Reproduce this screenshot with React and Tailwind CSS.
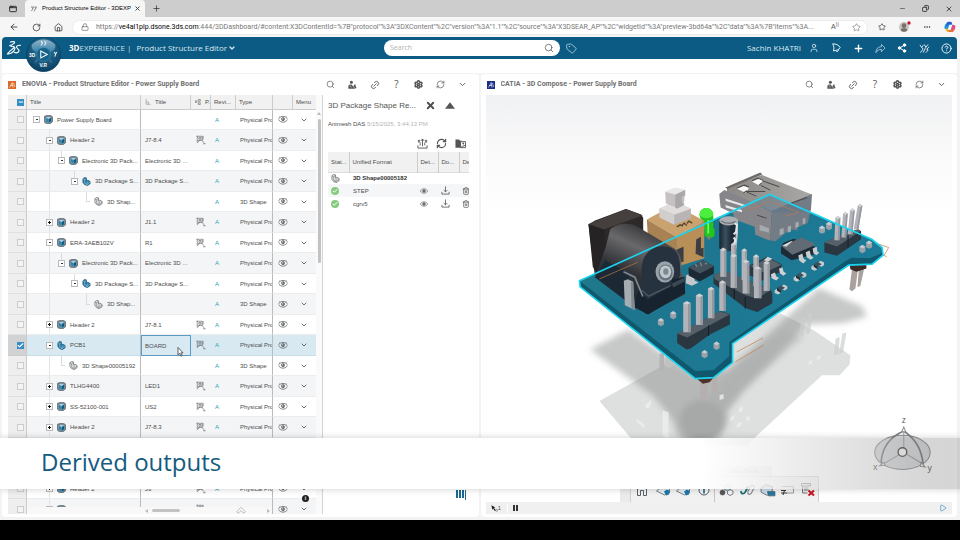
import React, { useState } from 'react'
import {
  AppWindow, ArrowLeft, Check, ChevronDown, CircleHelp, Copy, Ellipsis, House, Link2, Lock,
  Minus, Play, Plus, RotateCw, RefreshCw, Search, Settings, Share2, Star, Tag, Trash2, User, X,
} from 'lucide-react'

const ROWS = [
  { depth: 0, toggle: '-', icon: 'product', title: 'Power Supply Board', type: 'Physical Product' },
  { depth: 1, toggle: '-', icon: 'product', title: 'Header 2', inst: 'J7-8.4', pos: true, type: 'Physical Product' },
  { depth: 2, toggle: '-', icon: 'product', title: 'Electronic 3D Pack...', inst: 'Electronic 3D ...', type: 'Physical Product' },
  { depth: 3, toggle: '-', icon: 'part', title: '3D Package S...', inst: '3D Package S...', type: 'Physical Product' },
  { depth: 4, icon: 'shape', title: '3D Shap...', type: '3D Shape' },
  { depth: 1, toggle: '+', icon: 'product', title: 'Header 2', inst: 'J1.1', pos: true, type: 'Physical Product' },
  { depth: 1, toggle: '-', icon: 'product', title: 'ERA-3AEB102V', inst: 'R1', pos: true, type: 'Physical Product' },
  { depth: 2, toggle: '-', icon: 'product', title: 'Electronic 3D Pack...', inst: 'Electronic 3D ...', type: 'Physical Product' },
  { depth: 3, toggle: '-', icon: 'part', title: '3D Package S...', inst: '3D Package S...', type: 'Physical Product' },
  { depth: 4, icon: 'shape', title: '3D Shap...', type: '3D Shape' },
  { depth: 1, toggle: '+', icon: 'product', title: 'Header 2', inst: 'J7-8.1', pos: true, type: 'Physical Product' },
  { depth: 1, toggle: '-', icon: 'part', title: 'PCB1', inst: 'BOARD', pos: true, type: 'Physical Product' },
  { depth: 2, icon: 'shape', title: '3D Shape00005192', type: '3D Shape' },
  { depth: 1, toggle: '+', icon: 'product', title: 'TLHG4400', inst: 'LED1', pos: true, type: 'Physical Product' },
  { depth: 1, toggle: '+', icon: 'product', title: 'SS-52100-001', inst: 'US2', pos: true, type: 'Physical Product' },
  { depth: 1, toggle: '+', icon: 'product', title: 'Header 2', inst: 'J7-8.3', pos: true, type: 'Physical Product' },
  { depth: 1, toggle: '+', icon: 'product' },
  { depth: 1, toggle: '+', icon: 'product' },
  { depth: 1, toggle: '+', icon: 'product', title: 'Header 2', inst: 'J3', pos: true, type: 'Physical Product' },
  { depth: 1, toggle: '+', icon: 'product', title: 'ERA-3AEB102V', inst: 'R4', pos: true, type: 'Physical Product' },
]

const INDENT = ['pl-[6px]', 'pl-[19px]', 'pl-[31px]', 'pl-[44px]', 'pl-[56px]']
const STUB = ['left-[9px]', 'left-[22px]', 'left-[34px]', 'left-[47px]', 'left-[59px]']

const URL_TAIL = ':444/3DDashboard/#content:X3DContentId=%7B"protocol"%3A"3DXContent"%2C"version"%3A"1.1"%2C"source"%3A"X3DSEAR_AP"%2C"widgetId"%3A"preview-3bd64a"%2C"data"%3A%7B"items"%3A...'

function NodeIcon({ kind }) {
  if (kind === 'product') {
    return (
      <svg viewBox="0 0 20 20" className="size-[9px] shrink-0">
        <path d="M1 3l5-2h9l4 3v11l-5 4H5l-4-3z" fill="#7b8991" stroke="#4b5961" strokeWidth="1.5" />
        <path d="M4 6l6-2 6 2v8l-6 4-6-4z" fill="#a9d3e8" />
        <path d="M10 9l6-3v8l-6 4z" fill="#14587b" />
        <path d="M4 6l6 3v9l-6-4z" fill="#2f83ad" />
      </svg>
    )
  }
  const part = kind === 'part'
  return (
    <svg viewBox="0 0 20 20" className="size-[9px] shrink-0">
      <path
        d="M2 4l4-3 4 1v7l3-2 5 3v5l-6 4-6-2-4-5z"
        fill={part ? '#2879a3' : '#e3e5e6'}
        stroke={part ? '#174f6d' : '#5d6265'}
        strokeWidth="1.5"
      />
      <path d="M2 4l4 2 4-3M6 6v8l5 3 7-6M11 17v-5l3-2" fill="none" stroke={part ? '#a4d4ec' : '#6d7275'} strokeWidth="1.3" />
    </svg>
  )
}

function EyeIcon() {
  return (
    <svg viewBox="0 0 24 18" className="h-[7px] w-[10px]" fill="none" stroke="#4b4f52" strokeWidth="1.8">
      <path d="M1 7c5-8 17-8 22 0M1 9c3 9 19 9 22 0M4 3l-2-1M20 3l2-1" />
      <circle cx="12" cy="8" r="4" fill="#777c7f" strokeWidth="1.5" />
      <circle cx="11" cy="7" r="1.3" fill="#fff" stroke="none" />
    </svg>
  )
}

function PositionIcon() {
  return (
    <svg viewBox="0 0 24 24" className="size-[10px]" fill="none" stroke="#5d6164" strokeWidth="1.5">
      <path d="M3 2v15M1 3h14v10H4M7 6h5v4H7zM2 19l7-6M13 12l8 8M17 21h6M17 2v9" />
    </svg>
  )
}

function PersonShareIcon() {
  return (
    <svg viewBox="0 0 24 24" className="size-[9px]" fill="currentColor">
      <circle cx="9" cy="6" r="4" />
      <path d="M1 21v-6c2-4 10-4 11 0l2 2 5-7 2 8 2 3-7 2H1z" />
      <path d="M5 14l4 6M14 17l3 4" stroke="#fff" strokeWidth="1.4" />
    </svg>
  )
}

function DsLogo() {
  return (
    <svg viewBox="0 0 48 48" className="size-4" fill="none" stroke="#fff" strokeWidth="3.4" strokeLinecap="round" strokeLinejoin="round">
      <path d="M13 6c12-3 16 0 10 5-4 3-8 5-12 6M15 19c10-1 15 3 10 11-4 7-13 12-21 12 7-9 14-13 20-19" />
      <path d="M43 16c-8-1-14 3-10 8s9 8 4 12c-3 3-8 3-12 1" />
    </svg>
  )
}

function Compass() {
  return (
    <svg viewBox="0 0 102 102" className="absolute top-0 left-[24px] size-[35px]">
      <defs>
        <radialGradient id="disc" cx=".5" cy=".35" r=".65">
          <stop offset="0" stopColor="#2e7ca6" />
          <stop offset="1" stopColor="#0b3f61" />
        </radialGradient>
        <linearGradient id="gloss" x1="0" x2="0" y1="0" y2="1">
          <stop offset="0" stopColor="#8fb4c9" />
          <stop offset="1" stopColor="#3a82ab" />
        </linearGradient>
      </defs>
      <circle cx="51" cy="51" r="50" fill="url(#disc)" stroke="#0c4463" strokeWidth="2" />
      <path d="M17 22a46 46 0 0 1 68 0c3 10-4 18-14 22a22 22 0 0 0-40 0c-10-4-17-12-14-22z" fill="url(#gloss)" />
      <circle cx="51" cy="51" r="20" fill="#14618a" stroke="#3985ad" strokeWidth="2" />
      <path d="M43 41l19 10-19 10z" fill="none" stroke="#fff" strokeWidth="3" />
      <path d="M26 74l8-7M76 74l-8-7" stroke="#6ea8c6" strokeWidth="2" />
      <path d="M44 12l4 5-4 8M54 12l4 5-4 8M82 44l4 5 4-5M87 48l-3 9" fill="none" stroke="#e7f1f6" strokeWidth="3" />
      <text x="9" y="57" fontSize="14" fontWeight="bold" fill="#fff" fontFamily="Liberation Sans, sans-serif">3D</text>
      <text x="39" y="87" fontSize="14" fontWeight="bold" fill="#fff" fontFamily="Liberation Sans, sans-serif">V.R</text>
    </svg>
  )
}

function IconButton({ label, children, className = 'w-[22px]' }) {
  return (
    <button aria-label={label} className={`flex h-full shrink-0 items-center justify-center ${className}`}>
      {children}
    </button>
  )
}

function BrowserChrome() {
  return (
    <header className="shrink-0 bg-[#f6f6f6] text-[#333]">
      <div className="flex h-[17px] items-stretch bg-[#cdcdcd]">
        <IconButton label="Tab actions" className="w-[25px]"><AppWindow size={8} strokeWidth={3} /></IconButton>
        <div className="flex w-[120px] items-center rounded-t bg-[#f6f6f6] pl-1">
          <svg viewBox="0 0 24 24" className="size-[9px] shrink-0" fill="none" stroke="#555" strokeWidth="1.8">
            <path d="M5 8h7l-3 5M6 19l5-7M14 8h6l-3 5M13 20l5-8" />
          </svg>
          <span className="ml-1 w-[91px] whitespace-nowrap text-[6px] text-black">
            Product Structure Editor - 3DEXP
          </span>
          <IconButton label="Close tab" className="w-2"><X size={7} strokeWidth={3} /></IconButton>
        </div>
        <IconButton label="New tab"><Plus size={9} strokeWidth={2} /></IconButton>
        <div className="flex-1" />
        <IconButton label="Minimize" className="w-[23px]"><Minus size={7} /></IconButton>
        <IconButton label="Restore" className="w-[23px]"><Copy size={7} strokeWidth={3} className="-scale-x-100" /></IconButton>
        <IconButton label="Close" className="w-[23px]"><X size={8} strokeWidth={2.5} /></IconButton>
      </div>
      <div className="flex h-5 items-center pl-[3px]">
        <IconButton label="Back"><ArrowLeft size={10} /></IconButton>
        <IconButton label="Refresh"><RotateCw size={9} /></IconButton>
        <IconButton label="Home"><House size={9} /></IconButton>
        <div className="ml-[3px] flex h-[15px] min-w-0 flex-1 items-center rounded-full border border-[#ececec] bg-white pl-2">
          <Lock size={8} className="shrink-0 text-[#666]" />
          <p className="ml-[7px] min-w-0 flex-1 overflow-hidden font-[Roboto,sans-serif] text-[7px] whitespace-nowrap text-[#777]">
            https://<span className="text-black">ve4al1plp.dsone.3ds.com</span>{URL_TAIL}
          </p>
          <button aria-label="Read aloud" className="w-5 shrink-0 text-[7px] text-[#555]">A<sup>))</sup></button>
          <IconButton label="Add favorite"><Star size={9} strokeWidth={1.5} className="text-[#666]" /></IconButton>
        </div>
        <IconButton label="Favorites" className="w-7"><Star size={8} /></IconButton>
        <IconButton label="Profile" className="w-[18px]">
          <svg viewBox="0 0 36 36" className="size-3">
            <circle cx="15" cy="18" r="15" fill="#c8c4c1" />
            <circle cx="15" cy="14" r="7" fill="#77706c" />
            <path d="M5 28c2-9 18-9 20 0-6 6-14 6-20 0" fill="#77706c" />
            <circle cx="30" cy="6" r="5" fill="#c3162d" />
          </svg>
        </IconButton>
        <IconButton label="More" className="w-[26px]"><Ellipsis size={8} /></IconButton>
        <IconButton label="Copilot" className="w-5">
          <svg viewBox="0 0 36 36" className="size-3">
            <path d="M10 3h10l4 8h-8l-5 15-6-1c-5-2-4-7-2-13z" fill="#1c90d8" />
            <path d="M6 14L12 2h8c4 0 3 6 6 8H15z" fill="#2c59c8" />
            <path d="M4 22l8 1 5 10h-6c-4 0-6-6-7-11" fill="#eab52f" />
            <path d="M26 33H16l-3-6h7l5-16 6 1c5 2 3 8 1 14z" fill="#e0488e" />
            <path d="M26 33H16l-3-6h12l6-8c1 6-2 14-5 14" fill="#ef7138" />
          </svg>
        </IconButton>
      </div>
    </header>
  )
}

function TopBar() {
  return (
    <nav className="relative z-10 flex h-[22px] shrink-0 items-center rounded-t bg-[#0b5b84] font-['Open_Sans',sans-serif] text-white">
      <div className="flex w-[40%] items-center pl-1">
        <DsLogo />
        <Compass />
        <span className="ml-[47px] text-[8px] whitespace-nowrap"><b>3D</b><span className="text-[#c9dfea]">EXPERIENCE |</span></span>
        <button className="ml-[5px] flex items-center text-[8px] whitespace-nowrap text-[#d9e8f0]">
          Product Structure Editor <ChevronDown size={8} strokeWidth={4} className="ml-px" />
        </button>
      </div>
      <label className="flex h-4 w-[176px] items-center rounded-full bg-white px-[6px]">
        <input
          aria-label="Search"
          placeholder="Search"
          className="min-w-0 flex-1 text-[7px] text-black outline-none placeholder:text-[#b3b3b3]"
        />
        <Search size={10} strokeWidth={1.6} className="text-[#444]" />
      </label>
      <IconButton label="Tags"><Tag size={11} strokeWidth={1.5} className="-rotate-6 text-[#d5e6ee]" /></IconButton>
      <div className="flex h-full flex-1 items-center justify-end">
        <span className="mr-[2px] text-[8px] whitespace-nowrap text-[#dbe9f0]">Sachin KHATRI</span>
        <IconButton label="Profile"><User size={10} strokeWidth={1.6} /></IconButton>
        <IconButton label="Notifications">
          <svg viewBox="0 0 24 24" className="size-[10px]" fill="none" stroke="currentColor" strokeWidth="2.2" strokeLinejoin="round">
            <path d="M4 2c8 0 15 3 18 9-1 4-9 7-16 8 2-5 1-12-2-17zM12 19c3 3 6 1 6-3" />
          </svg>
        </IconButton>
        <IconButton label="Add"><Plus size={11} strokeWidth={3} /></IconButton>
        <IconButton label="Share">
          <svg viewBox="0 0 24 24" className="size-[11px]" fill="none" stroke="#d5e6ee" strokeWidth="1.5" strokeLinejoin="round">
            <path d="M14 3l8 8-8 8v-5c-6 0-9 2-12 7 0-8 5-13 12-13z" />
          </svg>
        </IconButton>
        <IconButton label="Network"><Share2 size={10} fill="currentColor" strokeWidth={2.4} /></IconButton>
        <IconButton label="Communities">
          <svg viewBox="0 0 24 24" className="size-[11px]" fill="none" stroke="currentColor" strokeWidth="1.8">
            <path d="M2 4l4 6 3-5M6 10l3 3-6 8M11 3l4 6 5-6M15 9l-6 12M22 8l-5 6 3 1-5 6" />
          </svg>
        </IconButton>
        <IconButton label="Help"><CircleHelp size={11} strokeWidth={2} /></IconButton>
      </div>
    </nav>
  )
}

function PanelHeader({ title, tint }) {
  return (
    <div className="flex h-[21px] shrink-0 items-center pl-[6px] pr-[5px] text-[#555]">
      <svg viewBox="0 0 16 16" className="size-2 shrink-0">
        <rect width="16" height="16" fill={tint} />
        <path d="M3 13L9 3M8 3l2 10M4 9h6M11 4l2 8" stroke="#fff" strokeWidth="1.2" fill="none" />
      </svg>
      <h2 className="ml-[6px] flex-1 truncate font-[Roboto,sans-serif] text-[7px] font-bold text-[#707070]">{title}</h2>
      <IconButton label="Find"><Search size={9} strokeWidth={1.8} /></IconButton>
      <IconButton label="Collaborate"><PersonShareIcon /></IconButton>
      <IconButton label="Copy link"><Link2 size={10} strokeWidth={2} className="-rotate-45" /></IconButton>
      <IconButton label="Help"><span className="font-['Open_Sans',sans-serif] text-[10px]">?</span></IconButton>
      <IconButton label="Preferences"><Settings size={9} strokeWidth={4} /></IconButton>
      <IconButton label="Refresh"><RefreshCw size={9} strokeWidth={1.8} /></IconButton>
      <IconButton label="Widget menu"><ChevronDown size={9} strokeWidth={2.4} /></IconButton>
    </div>
  )
}

function TreeRow({ row, selected, onSelect }) {
  const { depth, toggle, icon, title, inst, pos, type } = row
  const line = selected ? 'border-b-[#c8dde7]' : 'border-b-[#ebecee]'
  return (
    <tr className={`odd:h-5 even:h-[21px] ${selected ? 'bg-[#d8e9f1]' : 'odd:bg-white even:bg-[#f4f5f7]'}`}>
      <td className={`border-r border-b border-r-[#ccc] ${selected ? 'border-b-[#ccc] bg-[#d0d2d3]' : 'border-b-[#e0e0e0] bg-[#eeeeee]'}`}>
        <label className="relative ml-[9px] flex size-[7px]">
          <input
            type="checkbox"
            aria-label={`Select ${title}`}
            checked={selected}
            onChange={onSelect}
            className="size-[7px] appearance-none border border-[#ccc] bg-[#f4f4f4] checked:border-[#368ec4] checked:bg-[#368ec4]"
          />
          {selected && <Check size={7} strokeWidth={4} className="absolute text-white" />}
        </label>
      </td>
      <td className={`relative border-r border-b border-r-[#bbb] ${line}`}>
        {depth > 0 && <i className="absolute inset-y-0 left-[22px] w-px bg-[#e2e4e5]" />}
        {depth > 1 && <i className={`absolute top-0 h-1/2 w-px bg-[#d9dbdc] ${STUB[depth]}`} />}
        <div className={`relative flex items-center overflow-hidden whitespace-nowrap ${INDENT[depth]}`}>
          {toggle ? (
            <button aria-label={`Toggle ${title}`} className="flex size-[7px] shrink-0 items-center justify-center border border-[#b9b9b9] bg-white text-black">
              {toggle === '+'
                ? <svg viewBox="0 0 5 5" className="size-[5px]"><path d="M2 1h1v1h1v1H3v1H2V3H1V2h1z" fill="#111" /></svg>
                : <i className="h-px w-[2px] bg-[#333]" />}
            </button>
          ) : (
            <i className="flex w-[7px] shrink-0 pl-[3px]"><i className="h-px w-1 bg-[#d9dbdc]" /></i>
          )}
          <span className="mr-1 ml-[4px]"><NodeIcon kind={icon} /></span>
          {title}
        </div>
      </td>
      <td className={`overflow-hidden whitespace-nowrap ${selected ? 'border border-[#5b9bc2] pl-[3px]' : `border-b pl-1 ${line}`}`}>{inst}</td>
      <td className={`border-b pl-[5px] ${line}`}>{pos && <PositionIcon />}</td>
      <td className={`border-b pl-1 text-[#2ba3b5] ${line}`}>{title && 'A'}</td>
      <td className={`overflow-hidden border-r border-b border-r-[#bbb] pl-1 whitespace-nowrap ${line}`}>{type}</td>
      <td className={`border-b pl-[5px] ${line}`}><EyeIcon /></td>
      <td className={`border-b pl-[7px] ${line}`}>
        <button aria-label={`Menu of ${title}`} className="flex"><ChevronDown size={8} strokeWidth={2.4} /></button>
      </td>
    </tr>
  )
}

function StructureGrid() {
  const [picked, setPicked] = useState([11])
  const flip = i => setPicked(p => (p.includes(i) ? p.filter(n => n !== i) : [...p, i]))
  const th = 'overflow-hidden border-r border-b border-[#ccc] text-left font-normal whitespace-nowrap'

  return (
    <div className="relative flex w-[315px] shrink-0 overflow-hidden border-r border-[#d5d5d5]">
      <table className="w-[308px] table-fixed border-separate border-spacing-0 self-start text-[6px] leading-[8px] text-[#4c4c4c]">
        <colgroup>
          <col className="w-[19px]" />
          <col className="w-[114px]" />
          <col className="w-[50px]" />
          <col className="w-[20px]" />
          <col className="w-[25px]" />
          <col className="w-[37px]" />
          <col className="w-[20px]" />
          <col />
        </colgroup>
        <thead className="bg-[#f1f1f1]">
          <tr className="h-[15px]">
            <th className={th}>
              <button aria-label="Clear selection" className="ml-[9px] flex size-[7px] items-center justify-center bg-[#368ec4] text-white">
                <Minus size={6} strokeWidth={4} />
              </button>
            </th>
            <th className={`${th} pl-[3px]`}>Title</th>
            <th className={`${th} pl-1`}>
              <span className="flex items-center gap-[4px]">
                <svg viewBox="0 0 16 16" className="size-[6px]" fill="none" stroke="#888" strokeWidth="1.5"><path d="M3 0v14h12M3 8h6v6" /></svg>
                Title
              </span>
            </th>
            <th className={`${th} pl-1`}>
              <span className="flex items-center gap-[4px]">
                <svg viewBox="0 0 16 16" className="size-[6px] shrink-0" fill="none" stroke="#777" strokeWidth="2"><path d="M1 5h4v4H1zM9 1h5v5H9zM9 10h5v5H9z" /></svg>
                P.
              </span>
            </th>
            <th className={`${th} pl-[3px]`}>Revi...</th>
            <th className={`${th} pl-[3px]`}>Type</th>
            <th className={th} aria-label="Visibility" />
            <th className="border-b border-[#ccc] pl-[3px] text-left font-normal">Menu</th>
          </tr>
        </thead>
        <tbody>
          {ROWS.map((row, i) => (
            <TreeRow key={i} row={row} selected={picked.includes(i)} onSelect={() => flip(i)} />
          ))}
        </tbody>
      </table>
      {/* vertical scrollbar */}
      <div className="flex flex-1 flex-col items-center bg-[#fafafa] pt-[17px]">
        <i className="border-x-2 border-b-3 border-x-transparent border-b-[#bbb]" />
        <i className="mt-1 h-36 w-[3px] rounded-full bg-[#c2c2c2]" />
      </div>
      {/* horizontal scrollbar */}
      <div className="absolute bottom-0 left-[19px] flex h-[7px] w-[246px] items-center border-r border-[#bbb] bg-[#f8f8f8] pl-[118px]">
        <i className="border-y-2 border-r-3 border-y-transparent border-r-[#bbb]" />
        <i className="ml-1 h-[3px] w-7 rounded-full bg-[#c2c2c2]" />
        <svg viewBox="0 0 28 20" className="ml-14 h-[7px] w-[10px]" fill="#fff" stroke="#999" strokeWidth="2"><path d="M2 13L14 1l12 12-4 5-8-8-8 8z" /></svg>
        <i className="ml-[21px] border-y-2 border-l-3 border-y-transparent border-l-[#bbb]" />
      </div>
      <span className="absolute right-[13px] bottom-3 flex size-[7px] items-center justify-center rounded-full bg-[#222] text-[5px] font-bold text-white">i</span>
      {/* pointer */}
      <svg viewBox="0 0 16 24" className="absolute top-[252px] left-[169px] h-[10px] w-[7px]">
        <path d="M2 1v18l4-4 3 7 3-1-3-7h5z" fill="#fff" stroke="#333" strokeWidth="1.8" />
      </svg>
    </div>
  )
}

function DownloadIcon() {
  return (
    <svg viewBox="0 0 20 20" className="size-[9px]" fill="none" stroke="#555" strokeWidth="1.8">
      <path d="M2 13v5h16v-5M10 1v12M6 9l4 4 4-4" />
    </svg>
  )
}

function DerivedPane() {
  const th = 'overflow-hidden border-r border-[#ccc] pl-[3px] text-left font-normal whitespace-nowrap'
  return (
    <section className="relative flex min-w-0 flex-1 flex-col pt-[5px] pr-[10px] pl-[5px] text-[#4c4c4c]">
      <div className="flex items-center">
        <h3 className="text-[8px] leading-[10px] whitespace-nowrap text-[#555]">3D Package Shape Re...</h3>
        <button aria-label="Close" className="ml-[9px]"><X size={11} strokeWidth={4} /></button>
        <button aria-label="Collapse" className="ml-[9px]">
          <svg viewBox="0 0 12 8" className="h-[7px] w-[10px]"><path d="M6 0l6 8H0z" fill="#555" /></svg>
        </button>
      </div>
      <p className="mt-[9px] text-[6px] leading-[8px] whitespace-nowrap">Animesh DAS <span className="text-[#b5b5b5]">5/15/2025, 3:44:13 PM</span></p>
      <div className="mt-[10px] flex justify-end gap-2 pr-[3px] text-[#555]">
        <button aria-label="Convert">
          <svg viewBox="0 0 24 24" className="size-[11px]" fill="none" stroke="#555" strokeWidth="2">
            <path d="M2 16v6h20v-6M12 18V3M9 6l3-4 3 4M7 16C8 10 5 7 4 6M17 16c-1-6 2-9 3-10M3 10V5h4M21 10V5h-4" />
          </svg>
        </button>
        <button aria-label="Refresh"><RefreshCw size={11} strokeWidth={2.6} /></button>
        <button aria-label="Output folder">
          <svg viewBox="0 0 24 24" className="size-[11px]">
            <path d="M1 3h8l2 3h4v15H1z" fill="#555" />
            <path d="M12 8h11v13H12z" fill="#fff" stroke="#555" strokeWidth="2" />
            <circle cx="18" cy="12" r="2" fill="#555" />
            <path d="M14 19l8-3" stroke="#555" strokeWidth="2" />
          </svg>
        </button>
      </div>
      <div className="mt-[3px] overflow-hidden">
        <table className="w-full min-w-[141px] table-fixed text-[6px] leading-[8px]">
          <colgroup>
            <col className="w-[21px]" />
            <col />
            <col className="w-[21px]" />
            <col className="w-[21px]" />
            <col className="w-[10px]" />
          </colgroup>
          <thead>
            <tr className="h-5 border-b border-[#ddd] bg-[#f1f1f1]">
              <th className={th}>Stat...</th>
              <th className={`${th} pl-1`}>Unified Format</th>
              <th className={th}>Det...</th>
              <th className={th}>Do...</th>
              <th className="overflow-hidden pl-[3px] text-left font-normal">De</th>
            </tr>
          </thead>
          <tbody>
            <tr className="h-3">
              <td className="pl-[3px]"><NodeIcon kind="shape" /></td>
              <td colSpan={4} className="pl-1 font-bold text-[#333]">3D Shape00005182</td>
            </tr>
            {['STEP', 'cgrv5'].map(fmt => (
              <tr key={fmt} className="h-[13px] odd:bg-white even:bg-[#f4f6f8]">
                <td className="pl-[3px]">
                  <span className="flex size-2 items-center justify-center rounded-full bg-[#86ca80] text-white"><Check size={6} strokeWidth={4} /></span>
                </td>
                <td className="pl-1">{fmt}</td>
                <td className="pl-[3px]"><svg viewBox="0 0 24 16" className="h-[6px] w-2" fill="none" stroke="#666" strokeWidth="2"><path d="M1 8c5-9 17-9 22 0-5 9-17 9-22 0" /><circle cx="12" cy="8" r="4" fill="#666" /></svg></td>
                <td className="pl-[3px]"><button aria-label={`Download ${fmt}`} className="flex"><DownloadIcon /></button></td>
                <td className="overflow-hidden pl-[3px]"><button aria-label={`Delete ${fmt}`} className="flex"><Trash2 size={8} strokeWidth={2} className="shrink-0" /></button></td>
              </tr>
            ))}
          </tbody>
        </table>
      </div>
      <div className="mt-auto mb-[14px] flex h-[10px] justify-end gap-px pr-[3px]">
        <i className="h-2 w-[2px] bg-[#1b6a92]" />
        <i className="h-2 w-[2px] bg-[#1b6a92]" />
        <i className="h-2 w-[2px] bg-[#1b6a92]" />
        <i className="h-[10px] w-px bg-[#1b6a92]" />
      </div>
    </section>
  )
}

// Square header pin, drawn from its tip down to the plastic body
function Pin({ x, y, h, w = 18, lean = 0 }) {
  return (
    <g>
      <path d={`M${x + lean} ${y}h${w}l${-lean} ${h}h${-w}z`} fill="#b2b4ba" />
      <path d={`M${x + lean + w * 0.65} ${y}h${w * 0.35}l${-lean} ${h}h${-w * 0.35}z`} fill="#94989f" />
      <path d={`M${x + lean} ${y}l${w / 2}-6 ${w / 2} 6-${w / 2} 5z`} fill="#d0d1d5" />
    </g>
  )
}

function HeaderBlock({ d, top }) {
  return (
    <g>
      <path d={d} fill="#2a3741" />
      <path d={top} fill="#566068" />
    </g>
  )
}

function Via({ x, y }) {
  return (
    <g>
      <path d={`M${x - 9} ${y - 5}h18v14l-9 5-9-5z`} fill="#9aa2a9" />
      <path d={`M${x - 9} ${y - 5}l9-6 9 6-9 5z`} fill="#c9cdd0" />
    </g>
  )
}

function Chip({ x, y }) {
  return (
    <g>
      <path d={`M${x - 4} ${y + 12}l8-5 10 5v8l-8 5-10-5zM${x + 16} ${y}l8-5 10 5v8l-8 5-10-5z`} fill="#c5cbcf" />
      <path d={`M${x + 3} ${y + 5}l12-7 12 7-12 8z`} fill="#3c505c" />
      <path d={`M${x + 3} ${y + 5}l12 8v7l-12-7z`} fill="#1c2b36" />
    </g>
  )
}

function BoardScene() {
  return (
    <svg viewBox="486 95 466 407" preserveAspectRatio="xMidYMin slice" className="size-full" role="img" aria-label="Power supply board 3D model">
      <defs>
        <linearGradient id="sky" x1="0" x2="0" y1="0" y2="1">
          <stop offset="0" stopColor="#f0f1f3" />
          <stop offset=".15" stopColor="#fafafa" />
          <stop offset=".3" stopColor="#fff" />
        </linearGradient>
        <linearGradient id="top" x1="0" x2="1" y1="0" y2=".4">
          <stop offset="0" stopColor="#1f8288" />
          <stop offset=".3" stopColor="#1e748c" />
          <stop offset="1" stopColor="#1c7b98" />
        </linearGradient>
        <linearGradient id="barrel" x1=".7" x2=".25" y1="0" y2="1">
          <stop offset="0" stopColor="#252426" />
          <stop offset=".3" stopColor="#69686b" />
          <stop offset=".55" stopColor="#323438" />
          <stop offset="1" stopColor="#15202b" />
        </linearGradient>
        <linearGradient id="can" x1="0" x2="1">
          <stop offset="0" stopColor="#162532" />
          <stop offset=".35" stopColor="#3b4f5c" />
          <stop offset=".7" stopColor="#1b2b38" />
        </linearGradient>
        <linearGradient id="shell" x1="0" x2="1">
          <stop offset="0" stopColor="#8b8885" />
          <stop offset="1" stopColor="#aaa8a6" />
        </linearGradient>
        <filter id="soft" x="-20%" y="-20%" width="140%" height="140%"><feGaussianBlur stdDeviation="10" /></filter>
        <filter id="faint"><feGaussianBlur stdDeviation="2" /></filter>
      </defs>
      <rect x="-500" y="95" width="3000" height="407" fill="url(#sky)" />

      {/* floor shadow and mirror image */}
      <g transform="translate(480 90) scale(.33333)">
        <path d="M358 932L545 828 900 670 1000 720 1110 795 1108 822 1078 855 1025 855 820 1045 800 1065H470z" fill="#dde0de" filter="url(#faint)" />
        <path d="M330 778l115-60 200 140 100-20 270-245 130 55 15 30-70 20-110 5-190 200-50 60c0 130-150 130-160 30l-60-75z" fill="#8f9291" fillOpacity=".5" filter="url(#soft)" />
        <path d="M760 830l150-110 60 20-190 160-40 60-60-40z" fill="#a7aaa9" fillOpacity=".4" filter="url(#soft)" />
        <ellipse cx="668" cy="990" rx="70" ry="62" fill="#8f9291" fillOpacity=".4" filter="url(#soft)" />
        <g fill="#edefee">
          <path d="M547 960l18 6v80l-18-10zM470 985l25 20-4 8-22-18zM495 945l20-18-6 24-10 4zM752 980l12-6-4 14-10 5zM775 955l12-8 2 12-12 8zM798 980l10-4v14l-10 3zM770 1000l16-6-4 14-14 4zM718 915l12-4v14l-12 4zM985 815l10-6v10l-10 6zM1010 800l10-6v10l-10 6z" opacity=".8" />
        </g>
        <g fill="#cbcecd">
          <path d="M962 685l12-4-4 55-12 3zM985 670l12-3-8 60-12 4zM1066 745l12-4-4 50-14 3zM1086 730l12-3-10 60-12 4z" opacity=".7" />
        </g>
        <path d="M538 790h14v45l-6 6-8-6z" fill="#b5b3b4" />
        <path d="M556 800h22v28l-10 6-12-4z" fill="#c2c1c1" />
      </g>

      <g transform="translate(570 160) scale(.33333)">
        {/* leads under the board */}
        <path d="M390 655h22v60l-10 8-12-8zM424 650h18v44l-8 8-10-6z" fill="#b5b0af" />
        <path d="M380 655l60-15-22 26-20 4z" fill="#4a332b" />
        <path d="M845 325h18l-8 60-10 8-8-5zM866 322h16l-12 55-9 4z" fill="#a8a19e" />
        <path d="M838 315l50-2v12l-30 10-18-8z" fill="#3c2c28" />

        {/* board */}
        <path d="M28 362L598 103 905 238 935 262 938 285 905 312 835 315 487 550V607L430 652 375 655 30 380z" fill="#10586e" />
        <path d="M28 362L598 103 905 238 935 262 932 280 898 294 843 293 820 306 477 545V587L430 629 375 632z" fill="url(#top)" />

        {/* usb connector */}
        <path d="M470 84L575 45 725 103 605 155 470 96z" fill="url(#shell)" />
        <path d="M465 82L570 37l6 6-104 44z" fill="#6e6c6b" />
        <path d="M462 90l143 62-5 90-45-18-2-24-60-22-4-18-38-18-4-40z" fill="#86868a" />
        <path d="M605 152l120-50-3 45-10 42-30 12v10l-22-4-45 36-15-2z" fill="#737b85" />
        <path d="M465 115l60 20v6l-58-18zM465 135l50 15v6l-48-14z" fill="#e9eaea" />
        <path d="M500 86l20-8 16 6-10 14zM545 64l22-8 12 6-12 14z" fill="#fbfbfb" />
        <path d="M525 94l60 0M530 96l28 12M575 62l52 18M572 76l28 14M500 84l22-9 14 5M545 62l18-8 14 6M520 98l10-6M566 76l8-8M560 165l28 9M660 130l50-18" fill="none" stroke="#4a494b" strokeWidth="3" />
        <path d="M568 194l28 10v14l-28-8zM628 208l12-5v18l-12 4zM652 200l10-4v18l-10 4zM675 188l10-4v16l-10 4zM697 176l8-3v16l-8 4z" fill="#a4abb0" />
        <path d="M600 105L720 155 605 158 550 127z" fill="#58768c" opacity=".45" />

        {/* led */}
        <path d="M388 165c0-28 40-28 41 0v38l4 4v18c-6 12-25 10-30 0v-16l-14-40z" fill="#21c51e" />
        <path d="M388 165c0-28 40-28 41 0-10 12-30 12-41 0z" fill="#4bee3d" />
        <path d="M414 180v40" stroke="#79f56c" strokeWidth="5" />
        <path d="M412 228l8 0v10h-8z" fill="#857f68" />

        {/* push switch */}
        <path d="M230 178L312 134 402 182 318 230z" fill="#c9a26d" />
        <path d="M230 178l88 52v75l-30-34-55-40z" fill="#a88252" />
        <path d="M318 230l84-48v112l-70 22-14-12z" fill="#b98f58" />
        <path d="M378 238l14-8v35l8-2v28l-24-10zM320 268l20-8v45l-20 2z" fill="#3a3d43" />
        <path d="M320 200l10-6 8 4M334 197l8-8 8 7M350 190l6-7 10 6" fill="none" stroke="#5b4630" strokeWidth="4" />
        <path d="M268 146l46-22 48 22v28l-50 20-44-22z" fill="#b9b4b6" />
        <path d="M268 146l46-22 48 22-50 18z" fill="#e0dddd" />
        <path d="M268 146l44 18v30l-44-22z" fill="#d2cece" />
        <path d="M285 96l30-12 30 6-4 44-20 10-34-14z" fill="#c5c1c2" />
        <path d="M283 94l32-12 30 8-30 14z" fill="#eae8e8" />
        <path d="M315 104l30-14v16l-10 4v18l8 6-22 12-6-4z" fill="#aca8aa" />

        {/* power jack */}
        <path d="M55 192l22-12 90-33 46 16 6 10v40L150 330l-70 10-12-20z" fill="#2d2929" />
        <path d="M55 192L168 147l50 19-118 42z" fill="#453f3e" />
        <path d="M55 192l47 16 18 150-46-15z" fill="#262325" />
        <path d="M120 208c20-20 60-22 82-8l110 65c20 12 25 40 20 70l12 22v45L230 462 75 350l32-90z" fill="url(#barrel)" />
        <path d="M105 300l70 40 10 95L75 352z" fill="#1c2935" />
        <path d="M215 315c8-55 65-70 98-44 14 14 18 34 17 75l-36 52-62 20-18-20z" fill="#26323e" />
        <path d="M205 390l28 28 72-42V358l38-8 2 48-36 20-75 45-42-22z" fill="#17232e" />
        <path d="M305 370l38-18v12l-34 18z" fill="#3b4955" />
        <path d="M215 390l20 18 66-32" stroke="#4c5964" strokeWidth="4" fill="none" />
        <path d="M160 335l34 16 24 58" stroke="#7d8992" strokeWidth="5" fill="none" />
        <ellipse cx="284" cy="335" rx="28" ry="32" fill="#98a3ab" />
        <ellipse cx="286" cy="337" rx="21" ry="24" fill="#66727c" />
        <ellipse cx="286" cy="335" rx="17" ry="19" fill="#c0c7cb" />
        <ellipse cx="287" cy="334" rx="8" ry="10" fill="#7d8992" />
        <path d="M161 362l12-5 16 8 5 84-30-14z" fill="#a5adb3" />
        <path d="M182 366l7 0 5 84-10-4z" fill="#7f8990" />

        {/* capacitor */}
        <path d="M487 172l16 8v40l-5 46-12 6z" fill="#c6c9cc" />
        <path d="M447 182h52l-6 84c-8 12-38 8-46-2z" fill="url(#can)" />
        <ellipse cx="475" cy="182" rx="28" ry="14" fill="#abaeb2" />
        <path d="M452 182c12 8 28 10 44 2" stroke="#606a72" strokeWidth="3" fill="none" />
        <path d="M493 190l7 4-3 22-7 6M490 232l5 6-4 20" stroke="#e3e5e6" strokeWidth="6" fill="none" />

        {/* small packages */}
        <path d="M348 345l25-12v28l12 6-20 10-18-8z" fill="#c6c9cb" />
        <path d="M355 322l44-22 32 18v22l-42 24-34-18z" fill="#1c2a36" />
        <path d="M355 322l44-22 32 18-42 22z" fill="#43535e" />
        <path d="M375 312l6 8M390 306l4 12M404 312l6-4" stroke="#76858f" strokeWidth="4" />
        <path d="M632 262l8-14 30-12 62 22v24l-68 18-32-20z" fill="#1d2b37" />
        <path d="M634 258l60-26 38 18v6l-66 28z" fill="#626a73" />
        <path d="M636 256l24-12 8-2-20 18z" fill="#d6d9db" />
        <path d="M684 286l12-6 4 16 8 5-9 9-12-8zM706 276l12-5 4 16 8 5-9 7-12-8zM727 265l12-5 2 14 6 4-9 7-9-6z" fill="#c8cdd0" />
        <path d="M530 320l60-30 44 22v22l-60 28-40-18z" fill="#2b3943" />
        <path d="M540 318l55-24 38 20-50 24z" fill="#58636c" />
        <path d="M580 300l12-10 14 6-12 8zM602 342l12-5 4 12 8 4-8 8-14-7zM626 326l10-5 4 14 8 5-9 7-10-8z" fill="#ced2d4" />
        <Chip x={727} y={307} />
        <Chip x={674} y={340} />
        <Chip x={617} y={378} />

        {/* pin headers */}
        <HeaderBlock d="M762 247l42-18 60-22 8 6v24l-72 50-38-10z" top="M762 247l44-20 56-20 8 6-70 46z" />
        <path d="M833 225v38" stroke="#14212b" strokeWidth="3" />
        <Pin x={792} y={172} h={68} w={15} lean={3} />
        <Pin x={813} y={160} h={72} w={14} lean={5} />
        <Pin x={832} y={150} h={72} w={14} lean={7} />
        <Pin x={850} y={136} h={72} w={14} lean={12} />

        <HeaderBlock d="M430 345l30-12 90 34 50 20 6 12v30l-45 26-36-12-65-50-30-22z" top="M430 345l32-14 140 58-42 26-34-10-92-48z" />
        <Pin x={482} y={252} h={85} w={16} />
        <Pin x={450} y={268} h={82} w={18} />
        <Pin x={514} y={270} h={90} w={16} />
        <Pin x={549} y={288} h={90} w={17} />
        <Pin x={481} y={287} h={96} w={19} />
        <Pin x={580} y={308} h={84} w={18} />
        <Pin x={517} y={304} h={96} w={20} />
        <Pin x={551} y={324} h={90} w={22} />
        <path d="M492 385v32M525 410v35" stroke="#111d27" strokeWidth="3" />

        <HeaderBlock d="M321 520l30-15 100-52 28 8v32l-60 30-58 42-12 3-28-20z" top="M321 520l128-66 30 8-128 70z" />
        <path d="M415 495v32" stroke="#14212b" strokeWidth="3" />
        <Pin x={447} y={366} h={86} w={19} />
        <Pin x={413} y={386} h={88} w={19} />
        <Pin x={377} y={406} h={88} w={21} />
        <Pin x={339} y={428} h={88} w={22} />

        <Via x={272} y={484} />
        <Via x={309} y={463} />
        <Via x={439} y={555} />
        <Via x={403} y={580} />
        <Via x={755} y={207} />
        <Via x={776} y={196} />
        <Via x={876} y={265} />
        <Via x={896} y={252} />

        {/* selection outline */}
        <path d="M28 362L598 103 905 238 935 262 938 285 905 312 835 315 487 550V607L430 652 375 655 30 380z" fill="none" stroke="#1bd3ee" strokeWidth="5" />
        <path d="M88 356l115-50M535 150l60-26 90 32-40 12M925 252l30 10-14 24 8 4M495 605l85-50M500 575l78-42" fill="none" stroke="#bd7a4c" strokeWidth="2" />
      </g>

      {/* orientation triad */}
      <g transform="translate(640 400) scale(.33333)" fill="none" stroke="#8a8e91" strokeWidth="3">
        <ellipse cx="786" cy="156" rx="83" ry="51" fill="#b6bbc0" fillOpacity=".5" />
        <path d="M790 92c-42 18-66 52-68 96M790 92c30 20 54 52 58 100" strokeWidth="5" stroke="#7d8184" />
        <path d="M790 92v52M778 162l-52 30M800 162l46 28" stroke="#999" />
        <circle cx="786" cy="155" r="13" fill="#fff" stroke="#444" strokeWidth="4" />
        <path d="M784 94l6-14 6 14zM718 196l12-10 4 8zM842 186l12 14-14-2z" fill="#fff" />
        <g fill="#55585b" stroke="none" fontFamily="Open Sans, sans-serif" fontSize="26">
          <text x="784" y="69">z</text>
          <text x="698" y="208">x</text>
          <text x="861" y="213">y</text>
        </g>
      </g>
    </svg>
  )
}

function SceneToolbar() {
  return (
    <div className="absolute bottom-0 left-[134px] flex items-end">
      <i className="h-[25px] w-[10px] bg-[#ebebeb]" />
      <div>
        <div className="ml-[87px] flex h-[10px] w-[55px] items-center justify-center bg-[#ececec] text-[6px] text-[#aaa]">View Tools</div>
        <div className="flex h-[26px] items-center border border-b-0 border-[#cfcfcf] bg-[#f1f1f1] text-[#5a6065]">
          <IconButton label="Home view" className="w-[23px]">
            <svg viewBox="0 0 24 24" className="size-3" fill="none" stroke="currentColor" strokeWidth="2"><path d="M2 12L12 3l10 9M3 11v12h6V13h6v10h6V11" /></svg>
          </IconButton>
          {['Open', 'Insert'].map(n => (
            <IconButton key={n} label={n} className="w-5">
              <svg viewBox="0 0 30 24" className="h-3 w-[15px]"><path d="M1 14l10-8 16 3v8l-10 5z" fill="#e5ebef" stroke="#5a6065" strokeWidth="1.5" /><path d="M16 15l6-4 6 3-2 7-6 2z" fill="#1d79a8" /></svg>
            </IconButton>
          ))}
          <IconButton label="Information" className="w-5">
            <svg viewBox="0 0 24 24" className="size-3" fill="none" stroke="currentColor" strokeWidth="2"><circle cx="12" cy="12" r="10" /><path d="M12 6v2M12 10v9" stroke="#14587b" strokeWidth="3" /></svg>
          </IconButton>
          <i className="h-full w-px bg-[#c4c4c4]" />
          <IconButton label="Products" className="w-[23px]">
            <svg viewBox="0 0 30 24" className="h-3 w-[15px]" stroke="#5a6065" strokeWidth="1.5"><path d="M11 4l6-3 6 3v7l-6 3-6-3z" fill="#b7d4e3" /><circle cx="7" cy="17" r="5" fill="#555" /><path d="M17 14l5-3 6 3v6l-6 3-5-3z" fill="#f3f3f3" /></svg>
          </IconButton>
          <IconButton label="Link parts" className="w-5">
            <svg viewBox="0 0 30 24" className="h-3 w-[15px]" fill="none" strokeWidth="3.5"><path d="M2 14c0 8 7 6 9 1l5-10" stroke="#1c6b72" /><path d="M15 17c2 6 7 4 9-1l4-8c2-6-6-7-8-1l-5 10" stroke="#8a9095" strokeWidth="2.5" /></svg>
          </IconButton>
          <IconButton label="Section" className="w-5">
            <svg viewBox="0 0 30 24" className="h-[14px] w-[16px]" stroke="#5a6065" strokeWidth="1.5"><path d="M2 8l9-6 12 4v12l-10 4-11-6z" fill="#c8dbe7" /><path d="M14 15h14v8H16z" fill="#1d79a8" /></svg>
          </IconButton>
          <IconButton label="Annotate" className="w-5">
            <svg viewBox="0 0 30 24" className="h-3 w-[15px]" fill="none" stroke="#333" strokeWidth="2"><path d="M4 5h23v13H14" stroke="#999" /><path d="M2 13h10M2 18h12M6 22l3-9" /></svg>
          </IconButton>
          <IconButton label="Remove" className="w-5">
            <svg viewBox="0 0 30 30" className="size-[15px]" fill="none" strokeWidth="2"><path d="M3 3h18v5H3zM5 8v14h10M8 12h9M8 16h9" stroke="#777" fill="#dbe6ec" /><path d="M17 17l11 10M28 17L17 27" stroke="#c4161c" strokeWidth="4" /></svg>
          </IconButton>
        </div>
      </div>
    </div>
  )
}

export default function App() {
  return (
    <div className="relative flex h-screen flex-col overflow-hidden bg-black font-['Liberation_Sans',Arial,sans-serif]">
      <BrowserChrome />
      <div className="flex min-h-0 flex-1 flex-col bg-[#f3f3f3] pr-[3px] pl-[2px]">
        <TopBar />
        <div className="h-[14px] shrink-0 bg-white" />
        <main className="flex min-h-0 flex-1 gap-[2px] pt-px pb-[3px]">
          <section className="flex min-w-0 flex-1 flex-col rounded bg-white">
            <PanelHeader title="ENOVIA - Product Structure Editor - Power Supply Board" tint="#dc6b2b" />
            <div className="mb-[3px] ml-[6px] flex min-h-0 flex-1">
              <StructureGrid />
              <DerivedPane />
            </div>
          </section>
          <section className="flex min-w-0 flex-1 flex-col rounded bg-white">
            <PanelHeader title="CATIA - 3D Compose - Power Supply Board" tint="#1c2f86" />
            <div className="relative mr-[5px] ml-[5px] min-h-0 flex-1 overflow-hidden">
              <BoardScene />
              <SceneToolbar />
            </div>
            <div className="mx-[5px] mb-[3px] flex h-3 shrink-0 items-center bg-[#f0f0f0] text-[6px] text-[#555]">
              <button className="flex w-[22px] items-center justify-center border-r border-white" aria-label="Selected: 1">
                <svg viewBox="0 0 20 20" className="size-[7px]"><path d="M1 1l12 6-5 1 6 7-3 2-5-7-2 4z" fill="#222" /><circle cx="16" cy="15" r="3" fill="none" stroke="#555" strokeWidth="1.5" /></svg>1
              </button>
              <button aria-label="Pause" className="flex w-4 justify-center gap-px">
                <i className="h-[6px] w-[2px] bg-[#333]" /><i className="h-[6px] w-[2px] bg-[#333]" />
              </button>
              <button aria-label="Run" className="mr-[5px] ml-auto"><Play size={8} strokeWidth={2} className="text-[#3d8fc4]" /></button>
            </div>
          </section>
        </main>
      </div>
      <div className="h-5 shrink-0 bg-black" />

      {/* caption band laid over the recording */}
      <div className="absolute inset-x-0 bottom-[51px] z-20 flex h-[51px] items-center bg-linear-to-r from-white from-73% to-[#00000026] pb-[3px] pl-[41px] shadow-[0_0_7px_rgba(0,0,0,0.2)]">
        <h1 className="font-['Open_Sans',sans-serif] text-[24px] font-medium text-[#155b80]">Derived outputs</h1>
      </div>
    </div>
  )
}
